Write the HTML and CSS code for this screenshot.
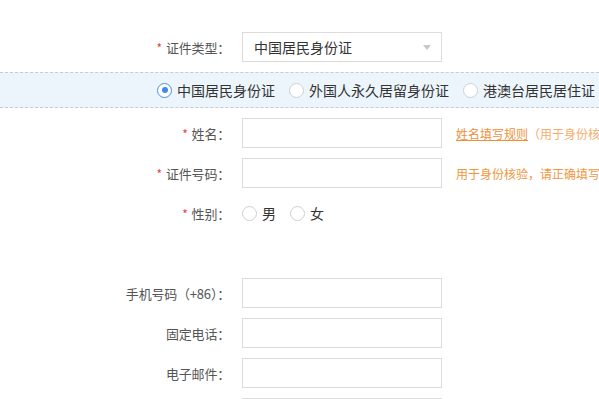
FILE: index.html
```html
<!DOCTYPE html>
<html lang="zh">
<head>
<meta charset="utf-8">
<link rel="stylesheet" href="styles.css">
</head>
<body>
<div class="form">
  <div class="row">
    <div class="label"><span class="req">*</span>证件类型：</div>
    <div class="select">
      <span>中国居民身份证</span>
      <span class="arrow"></span>
    </div>
  </div>

  <div class="band">
    <label class="opt"><span class="radio checked"></span>中国居民身份证</label>
    <label class="opt"><span class="radio"></span>外国人永久居留身份证</label>
    <label class="opt"><span class="radio"></span>港澳台居民居住证</label>
  </div>

  <div class="row">
    <div class="label"><span class="req">*</span>姓名：</div>
    <div class="input"></div>
    <div class="hint"><span class="link">姓名填写规则</span><span class="soft">（用于身份核验，请正确填写）</span></div>
  </div>

  <div class="row">
    <div class="label"><span class="req">*</span>证件号码：</div>
    <div class="input"></div>
    <div class="hint">用于身份核验，请正确填写</div>
  </div>

  <div class="row gap-after">
    <div class="label"><span class="req">*</span>性别：</div>
    <label class="opt small"><span class="radio"></span>男</label>
    <label class="opt small"><span class="radio"></span>女</label>
  </div>

  <div class="row">
    <div class="label">手机号码（+86）：</div>
    <div class="input"></div>
  </div>

  <div class="row">
    <div class="label">固定电话：</div>
    <div class="input"></div>
  </div>

  <div class="row">
    <div class="label">电子邮件：</div>
    <div class="input"></div>
  </div>

  <div class="row">
    <div class="label"></div>
    <div class="input"></div>
  </div>
</div>
</body>
</html>
```

FILE: styles.css
```css
html, body {
  margin: 0;
  padding: 0;
  background: #ffffff;
  overflow: hidden;
}

body {
  font-family: "Noto Sans CJK SC", "Noto Sans", "Liberation Sans", sans-serif;
  color: #555555;
  width: 599px;
}

.form {
  padding-top: 32px;
}

.row {
  display: flex;
  align-items: center;
  height: 30px;
  margin-bottom: 10px;
  white-space: nowrap;
}

.gap-after {
  margin-bottom: 50px;
}

.label {
  width: 242px;
  flex: none;
  box-sizing: border-box;
  padding-right: 12px;
  text-align: right;
  font-size: 13px;
  color: #555555;
  letter-spacing: -0.2px;
}

.req {
  color: #e8443a;
  font-size: 12px;
  margin-right: 4px;
}

.select,
.input {
  flex: none;
  width: 200px;
  height: 30px;
  box-sizing: border-box;
  border: 1px solid #dcdcdc;
  background: #fff;
}

.select {
  display: flex;
  align-items: center;
  justify-content: space-between;
  padding: 0 10px 0 11px;
  font-size: 14px;
  color: #333333;
}

.arrow {
  width: 0;
  height: 0;
  border-left: 4px solid transparent;
  border-right: 4px solid transparent;
  border-top: 5px solid #c8c8c8;
}

.band {
  display: flex;
  align-items: center;
  height: 36px;
  box-sizing: border-box;
  border-top: 1px dashed #c5ccd3;
  border-bottom: 1px dashed #c5ccd3;
  background: #edf5fc;
  padding-left: 157px;
  margin-bottom: 10px;
  white-space: nowrap;
  font-size: 14px;
  color: #333333;
}

.opt {
  display: flex;
  align-items: center;
  margin-right: 14px;
  font-size: 14px;
  color: #333333;
}

.opt.small {
  margin-right: 14px;
}

.radio {
  flex: none;
  width: 15px;
  height: 15px;
  box-sizing: border-box;
  border: 1px solid #d0d0d0;
  border-radius: 50%;
  background: #fff;
  margin-right: 5px;
  position: relative;
}

.radio.checked {
  border-color: #4a90e2;
}

.radio.checked::after {
  content: "";
  position: absolute;
  left: 3.5px;
  top: 3.5px;
  width: 6px;
  height: 6px;
  border-radius: 50%;
  background: #3d8de8;
}

.hint {
  margin-left: 14px;
  font-size: 12px;
  color: #f0963e;
}

.link {
  text-decoration: underline;
  color: #ef9038;
}

.soft {
  color: #f4ad6c;
}
```
